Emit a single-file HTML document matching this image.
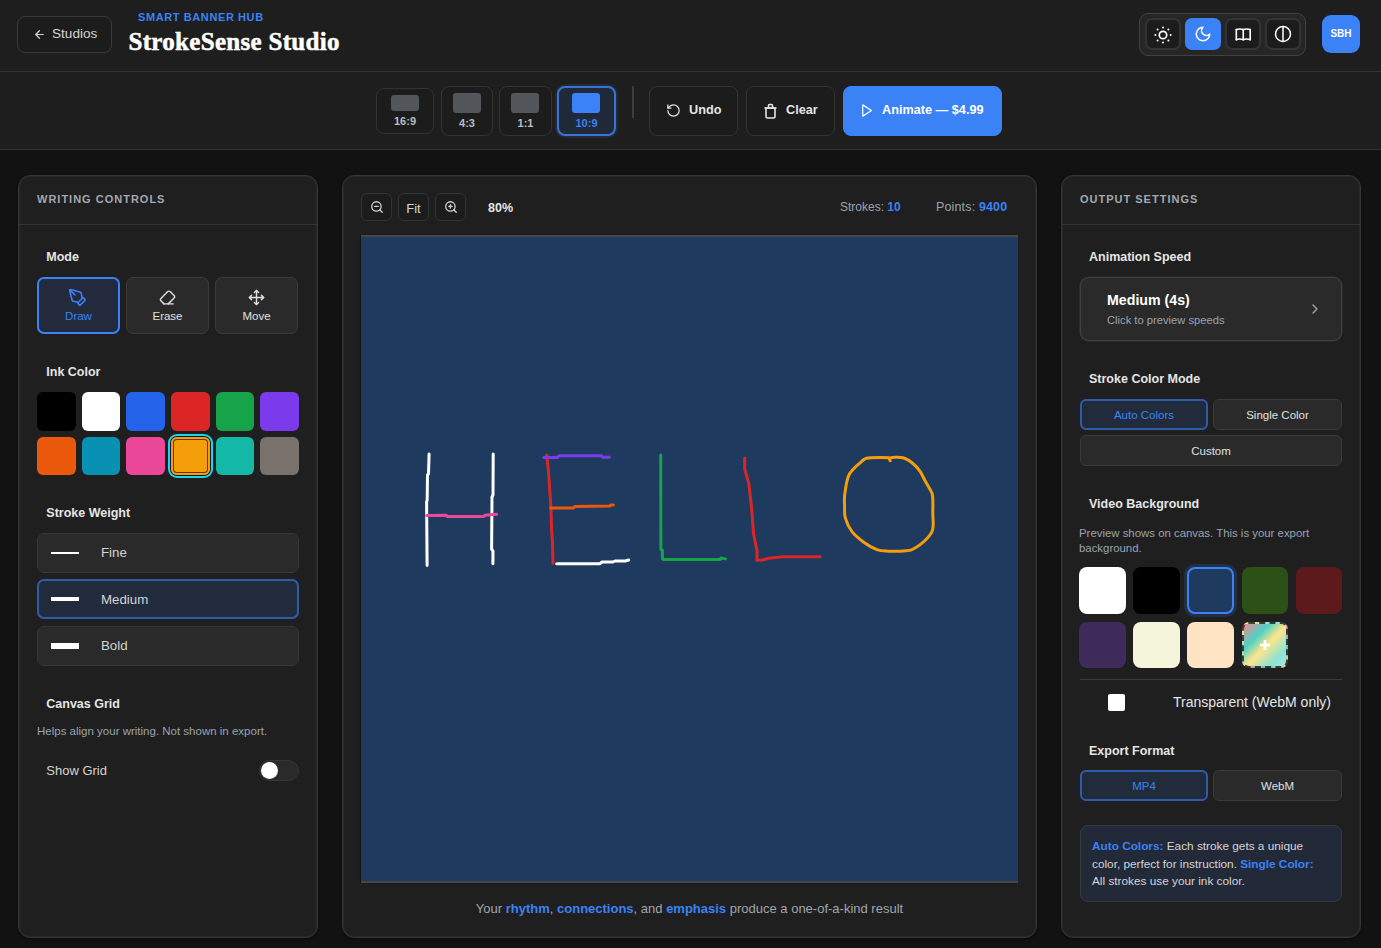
<!DOCTYPE html>
<html><head><meta charset="utf-8">
<style>
*{box-sizing:border-box;margin:0;padding:0}
html,body{width:1381px;height:948px;overflow:hidden;background:#121212;font-family:"Liberation Sans",sans-serif;color:#e5e5e5}
.abs{position:absolute}
svg{display:block;position:absolute}
.t{position:absolute;line-height:1;white-space:nowrap}
/* header */
#hdr{position:absolute;left:0;top:0;width:1381px;height:72px;background:#1e1e1e;border-bottom:1px solid #333}
#back{position:absolute;left:17px;top:16px;width:95px;height:37px;border:1px solid #3a3a3a;border-radius:8px;background:#1c1c1c}
#brand{left:138px;top:12px;font-size:11px;font-weight:bold;letter-spacing:0.6px;color:#3b82f6}
#title{left:128.5px;top:29px;font-family:"Liberation Serif",serif;font-weight:bold;font-size:25px;color:#fff;letter-spacing:0.3px;-webkit-text-stroke:0.5px #fff}
#themes{position:absolute;left:1139px;top:13px;width:167px;height:43px;border:1px solid #414141;border-radius:9px;background:#262626}
.tbtn{position:absolute;top:4px;width:36px;height:32px;border-radius:7px;border:2px solid #333;background:#1c1c1c}
.tbtn.on{background:#3b82f6;border-color:#3b82f6}
#avatar{position:absolute;left:1322px;top:15px;width:38px;height:38px;border-radius:9px;background:#3b82f6;color:#fff;font-weight:bold;font-size:10px;text-align:center;line-height:38px}
/* toolbar */
#tb{position:absolute;left:0;top:72px;width:1381px;height:78px;background:#1e1e1e;border-bottom:1px solid #333}
.ar{position:absolute;border:1px solid #333;border-radius:8px;background:#1c1c1c}
.ar .pv{position:absolute;background:#52555a;border-radius:3px}
.ar .lb{position:absolute;left:0;right:0;text-align:center;font-size:11px;line-height:1;font-weight:bold;color:#b8bcc4}
.ar.on{border:2px solid #3a72d6;background:#1f2937;box-shadow:0 0 0 2px rgba(59,130,246,.12)}
.ar.on .pv{background:#3b82f6}
.ar.on .lb{color:#3b82f6}
.abtn{position:absolute;top:14px;height:50px;border:1px solid #333;border-radius:8px;background:#1c1c1c}
.abtn .t{font-size:12.7px;font-weight:bold;color:#e5e5e5}
/* panels */
.panel{position:absolute;top:175px;height:763px;background:#1f1f1f;border:1px solid #353535;border-radius:12px;box-shadow:0 1px 3px rgba(0,0,0,.4),inset 0 0 0 1px #282828}
.ph{position:absolute;left:0;top:0;right:0;height:49px;border-bottom:1px solid #333}
.ph .t{left:18px;top:18px;font-size:11px;font-weight:bold;letter-spacing:1.0px;color:#a3a8b0}
.lbl{font-size:12.5px;font-weight:bold;color:#e5e5e5}
.mode{position:absolute;top:101px;width:83px;height:57px;border:1px solid #3a3a3a;border-radius:7px;background:#2a2a2a}
.mode.on{border:2px solid #3b82f6;background:#222a3c}
.mode .t{left:0;right:0;text-align:center;top:33px;font-size:11.5px;color:#e0e0e0}
.mode.on .t{color:#3b82f6;top:32px}
.sw{position:absolute;width:38.67px;height:38.67px;border-radius:6px}
.wt{position:absolute;left:18px;width:262px;height:40px;border:1px solid #363636;border-radius:7px;background:#2a2a2a}
.wt.on{border:2px solid #2f5ca8;background:#222b3c}
.wt .ln{position:absolute;left:13px;width:28px;background:#fff;top:50%}
.wt .t{left:63px;top:12px;font-size:13.3px;color:#d4d4d4}
.gray{color:#9ca3af}
.btn2{position:absolute;height:31px;border:1px solid #3a3a3a;border-radius:6px;background:#2a2a2a}
.btn2 .t{left:0;right:0;text-align:center;top:9.5px;font-size:11.5px;color:#e0e0e0}
.btn2.on{border:2px solid #2f5ca8;background:#222b3c}
.btn2.on .t{color:#3b82f6;top:8.5px}
.bg{position:absolute;width:46.4px;height:46.3px;border-radius:8px}
.zb{position:absolute;top:17px;width:31px;height:28px;border:1px solid #333;border-radius:6px;background:#1c1c1c}
</style></head><body>
<div id="hdr">
  <div id="back"><svg style="left:15px;top:11px" width="13" height="13" viewBox="0 0 24 24" fill="none" stroke="#d4d4d4" stroke-width="2.2" stroke-linecap="round" stroke-linejoin="round"><path d="m12 19-7-7 7-7"/><path d="M19 12H5"/></svg><div class="t" style="left:34px;top:9.5px;font-size:13.6px;color:#d4d4d4">Studios</div></div>
  <div id="brand" class="t">SMART BANNER HUB</div>
  <div id="title" class="t">StrokeSense Studio</div>
  <div id="themes">
    <div class="tbtn" style="left:5px"><svg style="left:7px;top:5.6px" width="18" height="18" viewBox="0 0 18 18" fill="none" stroke="#fff" stroke-width="1.7"><circle cx="9" cy="9" r="3.7"/><g fill="#fff" stroke="none"><circle cx="9" cy="1.4" r="1"/><circle cx="9" cy="16.6" r="1"/><circle cx="1.4" cy="9" r="1"/><circle cx="16.6" cy="9" r="1"/><circle cx="3.6" cy="3.6" r="1"/><circle cx="14.4" cy="3.6" r="1"/><circle cx="3.6" cy="14.4" r="1"/><circle cx="14.4" cy="14.4" r="1"/></g></svg></div>
    <div class="tbtn on" style="left:45px"><svg style="left:7px;top:5px" width="18" height="18" viewBox="0 0 24 24" fill="none" stroke="#fff" stroke-width="2" stroke-linecap="round" stroke-linejoin="round"><path d="M12 3a6 6 0 0 0 9 9 9 9 0 1 1-9-9Z"/></svg></div>
    <div class="tbtn" style="left:85px"><svg style="left:6.5px;top:5.2px" width="18.5" height="18.5" viewBox="0 0 24 24" fill="none" stroke="#fff" stroke-width="2.1" stroke-linecap="round" stroke-linejoin="round"><path d="M3 19a13 13 0 0 1 9 0a13 13 0 0 1 9 0"/><path d="M3 6a13 13 0 0 1 9 0a13 13 0 0 1 9 0"/><path d="M3 6v13"/><path d="M12 6v13"/><path d="M21 6v13"/></svg></div>
    <div class="tbtn" style="left:125px"><svg style="left:7px;top:5px" width="18" height="18" viewBox="0 0 24 24" fill="none" stroke="#fff" stroke-width="2" stroke-linecap="round" stroke-linejoin="round"><circle cx="12" cy="12" r="10"/><path d="M12 2v20"/></svg></div>
  </div>
  <div id="avatar">SBH</div>
</div>

<div id="tb">
  <div class="ar" style="left:376px;top:16px;width:58px;height:46px"><div class="pv" style="left:14px;top:6px;width:28px;height:16px"></div><div class="lb" style="top:27px">16:9</div></div>
  <div class="ar" style="left:441px;top:14px;width:52px;height:50px"><div class="pv" style="left:11px;top:6px;width:28px;height:20px"></div><div class="lb" style="top:31px">4:3</div></div>
  <div class="ar" style="left:499px;top:14px;width:53px;height:50px"><div class="pv" style="left:11px;top:6px;width:28px;height:20px"></div><div class="lb" style="top:31px">1:1</div></div>
  <div class="ar on" style="left:557px;top:14px;width:59px;height:50px"><div class="pv" style="left:13px;top:5px;width:28px;height:20px"></div><div class="lb" style="top:30px">10:9</div></div>
  <div class="abs" style="left:631.5px;top:14px;width:2px;height:32px;background:#3d3d3d"></div>
  <div class="abtn" style="left:649px;width:89px"><svg style="left:16px;top:16px" width="15" height="15" viewBox="0 0 24 24" fill="none" stroke="#e5e5e5" stroke-width="2" stroke-linecap="round" stroke-linejoin="round"><path d="M3 12a9 9 0 1 0 9-9 9.75 9.75 0 0 0-6.74 2.74L3 8"/><path d="M3 3v5h5"/></svg><div class="t" style="left:39px;top:17px">Undo</div></div>
  <div class="abtn" style="left:746px;width:89px"><svg style="left:17px;top:16px" width="13" height="16" viewBox="0 0 13 16" fill="none" stroke="#e5e5e5" stroke-width="1.6" stroke-linecap="round" stroke-linejoin="round"><path d="M2 5h9v8.5a1.5 1.5 0 0 1-1.5 1.5h-6A1.5 1.5 0 0 1 2 13.5z"/><path d="M1 5h11"/><path d="M4.5 5V2.5a1 1 0 0 1 1-1h2a1 1 0 0 1 1 1V5"/></svg><div class="t" style="left:39px;top:17px">Clear</div></div>
  <div class="abtn" style="left:843px;width:159px;background:#3b82f6;border-color:#3b82f6"><svg style="left:15px;top:16px" width="15" height="15" viewBox="0 0 24 24" fill="none" stroke="#fff" stroke-width="2" stroke-linecap="round" stroke-linejoin="round"><polygon points="6 3 20 12 6 21 6 3"/></svg><div class="t" style="left:38px;top:17px;color:#fff">Animate — $4.99</div></div>
</div>

<!-- LEFT PANEL -->
<div class="panel" style="left:18px;width:300px">
  <div class="ph"><div class="t">WRITING CONTROLS</div></div>
  <div class="t lbl" style="left:27.3px;top:75px">Mode</div>
  <div class="mode on" style="left:18px">
    <svg style="left:28.5px;top:9px" width="19" height="19" viewBox="0 0 24 24" fill="none" stroke="#3b82f6" stroke-width="2" stroke-linecap="round" stroke-linejoin="round"><path d="M15.707 21.293a1 1 0 0 1-1.414 0l-1.586-1.586a1 1 0 0 1 0-1.414l5.586-5.586a1 1 0 0 1 1.414 0l1.586 1.586a1 1 0 0 1 0 1.414z"/><path d="m18 13-1.375-6.874a1 1 0 0 0-.746-.776L3.235 2.028a1 1 0 0 0-1.207 1.207L5.35 15.879a1 1 0 0 0 .776.746L13 18"/><path d="m2.3 2.3 6.5 6.5"/></svg>
    <div class="t">Draw</div></div>
  <div class="mode" style="left:107px">
    <svg style="left:32px;top:11px" width="17" height="17" viewBox="0 0 24 24" fill="none" stroke="#e0e0e0" stroke-width="2" stroke-linecap="round" stroke-linejoin="round"><path d="m7 21-4.3-4.3c-1-1-1-2.5 0-3.4l9.6-9.6c1-1 2.5-1 3.4 0l5.6 5.6c1 1 1 2.5 0 3.4L13 21"/><path d="M20 21H7"/></svg>
    <div class="t">Erase</div></div>
  <div class="mode" style="left:196px">
    <svg style="left:32px;top:11px" width="17" height="17" viewBox="0 0 24 24" fill="none" stroke="#e0e0e0" stroke-width="2" stroke-linecap="round" stroke-linejoin="round"><path d="M12 2v20"/><path d="m15 19-3 3-3-3"/><path d="m19 9 3 3-3 3"/><path d="M2 12h20"/><path d="m5 9-3 3 3 3"/><path d="m9 5 3-3 3 3"/></svg>
    <div class="t">Move</div></div>

  <div class="t lbl" style="left:27.3px;top:190px">Ink Color</div>
  <div class="sw" style="left:18px;top:216px;background:#000"></div>
  <div class="sw" style="left:62.67px;top:216px;background:#fff"></div>
  <div class="sw" style="left:107.33px;top:216px;background:#2563eb"></div>
  <div class="sw" style="left:152px;top:216px;background:#dc2626"></div>
  <div class="sw" style="left:196.67px;top:216px;background:#16a34a"></div>
  <div class="sw" style="left:241.33px;top:216px;background:#7c3aed"></div>
  <div class="sw" style="left:18px;top:260.67px;background:#ea580c"></div>
  <div class="sw" style="left:62.67px;top:260.67px;background:#0891b2"></div>
  <div class="sw" style="left:107.33px;top:260.67px;background:#ec4899"></div>
  <div class="sw" style="left:152px;top:260.67px;background:#f59e0b;box-shadow:0 0 0 1px #0f172a,0 0 0 3px #22d3ee,inset 0 0 0 2px #f59e0b,inset 0 0 0 3px rgba(40,25,0,.75)"></div>
  <div class="sw" style="left:196.67px;top:260.67px;background:#14b8a6"></div>
  <div class="sw" style="left:241.33px;top:260.67px;background:#78716c"></div>

  <div class="t lbl" style="left:27.3px;top:331px">Stroke Weight</div>
  <div class="wt" style="top:357px"><div class="ln" style="height:2px;margin-top:-1px"></div><div class="t">Fine</div></div>
  <div class="wt on" style="top:403px"><div class="ln" style="height:4px;margin-top:-2px;left:12px"></div><div class="t" style="left:62px;top:11.5px">Medium</div></div>
  <div class="wt" style="top:450px"><div class="ln" style="height:6px;margin-top:-3px"></div><div class="t">Bold</div></div>

  <div class="t lbl" style="left:27.3px;top:522px">Canvas Grid</div>
  <div class="t gray" style="left:18px;top:550px;font-size:11.5px">Helps align your writing. Not shown in export.</div>
  <div class="t" style="left:27.3px;top:588px;font-size:13px;color:#d4d4d4">Show Grid</div>
  <div class="abs" style="left:240px;top:583.5px;width:40px;height:21px;border-radius:11px;background:#2a2a2a;border:1px solid #363636"><div class="abs" style="left:1px;top:1px;width:17px;height:17px;border-radius:50%;background:#fff"></div></div>
</div>

<!-- CENTER PANEL -->
<div class="panel" style="left:342px;width:695px">
  <div class="zb" style="left:18px"><svg style="left:7.5px;top:5.5px" width="14" height="14" viewBox="0 0 24 24" fill="none" stroke="#d4d4d4" stroke-width="2.2" stroke-linecap="round" stroke-linejoin="round"><circle cx="11" cy="11" r="8"/><path d="m21 21-4.3-4.3"/><path d="M8 11h6"/></svg></div>
  <div class="zb" style="left:55px"><div class="t" style="left:0;right:0;text-align:center;top:8px;font-size:13px;color:#d4d4d4">Fit</div></div>
  <div class="zb" style="left:92px"><svg style="left:7.5px;top:5.5px" width="14" height="14" viewBox="0 0 24 24" fill="none" stroke="#d4d4d4" stroke-width="2.2" stroke-linecap="round" stroke-linejoin="round"><circle cx="11" cy="11" r="8"/><path d="m21 21-4.3-4.3"/><path d="M11 8v6"/><path d="M8 11h6"/></svg></div>
  <div class="t" style="left:145px;top:26px;font-size:12.5px;font-weight:bold;color:#e5e5e5">80%</div>
  <div class="t gray" style="left:497px;top:25px;font-size:12px">Strokes: <b style="color:#3b82f6">10</b></div>
  <div class="t gray" style="left:593px;top:25px;font-size:12.5px;letter-spacing:0.15px">Points: <b style="color:#3b82f6">9400</b></div>
  <div class="abs" style="left:18px;top:59px;width:657px;height:648px;background:#1e3a5f;border-top:2px solid #474747;border-bottom:2px solid #474747;box-shadow:-1px 0 1px rgba(0,0,0,.35)"></div>
  <svg style="left:18px;top:59px" width="657" height="648" viewBox="361 235 657 648" fill="none" stroke-width="3" stroke-linecap="round" stroke-linejoin="round">
    <polyline stroke="#ffffff" points="429.1,454 428.5,473.8 427.5,475 427.2,499.9 426.6,502 427.1,565.4"/>
    <polyline stroke="#ffffff" points="493.2,454 493,495 492,497 491.6,549.3 493,551 492.9,563.7"/>
    <polyline stroke="#ec4899" points="426.7,515.4 445.9,515.2 447.5,516.6 483.6,516.6 485,515.2 496.6,514.3"/>
    <polyline stroke="#dc2626" points="546.7,454.9 548.5,472.4 549.5,486 550.8,505.4 551.5,527.3 552.5,543.8 553,563.2"/>
    <polyline stroke="#7c3aed" points="543.7,457.6 557.4,457.6 559,455.7 601.3,455.7 603,457.3 609.3,457.3"/>
    <polyline stroke="#ea580c" points="550.6,508.1 573.2,508 575,506.5 609.6,506 611,505 613.4,505.1"/>
    <polyline stroke="#ffffff" points="556.7,563.7 600,563.7 602,562 613,562 615,561 625.3,561 628.8,560"/>
    <polyline stroke="#16a34a" points="660.7,454.9 660.9,549.3 662.4,550.5 662.4,558.9 663.5,559.6 720,559.6 721,558 725.4,558.9"/>
    <polyline stroke="#dc2626" points="744.7,458 744.7,469 748.8,483.4 751.5,506.7 753.6,534.2 757,550.6 757,560.2 762.5,560 768.7,558.2 783,556.8 820.1,556.8"/>
    <path stroke="#f59e0b" d="M890.2,460.8 C890.2,460.3 888.1,458.4 890.2,457.9 C892.3,457.4 899.2,456.9 902.9,457.8 C906.6,458.7 909.8,461.0 912.6,463.2 C915.4,465.4 917.9,468.3 919.9,471.1 C921.9,473.9 923.2,477.3 924.8,480.2 C926.4,483.1 928.3,486.1 929.6,488.7 C930.9,491.3 932.1,491.9 932.6,496 C933.1,500.1 932.8,507.4 932.8,513 C932.8,518.6 933.9,525.3 932.6,529.9 C931.3,534.5 927.9,537.7 924.8,540.8 C921.7,543.9 916.8,547.1 913.8,548.7 C910.8,550.4 910.8,550.3 906.6,550.7 C902.4,551.1 893.4,551.4 888.4,551.2 C883.4,551.0 880.8,551.2 876.8,549.7 C872.8,548.2 868.2,545.5 864.1,542.5 C860.0,539.5 855.1,535.8 852,531.7 C848.9,527.6 846.5,522.1 845.3,517.8 C844.1,513.5 844.7,509.9 844.6,506 C844.5,502.1 844.1,499.6 844.7,494.7 C845.3,489.8 846.9,480.7 848.3,476.5 C849.7,472.3 851.2,471.6 853.2,469.3 C855.2,467.1 857.8,464.9 860,463 C862.2,461.1 863.1,459.1 866.5,458.2 C869.9,457.3 876.5,457.4 880.5,457.4 C884.5,457.3 888.6,457.8 890.2,457.9"/>
  </svg>
  <div class="t gray" style="left:0;right:0;text-align:center;top:726px;font-size:13px;color:#a0a6ae">Your <b style="color:#3b82f6">rhythm</b>, <b style="color:#3b82f6">connections</b>, and <b style="color:#3b82f6">emphasis</b> produce a one-of-a-kind result</div>
</div>

<!-- RIGHT PANEL -->
<div class="panel" style="left:1061px;width:300px">
  <div class="ph"><div class="t">OUTPUT SETTINGS</div></div>
  <div class="t lbl" style="left:27px;top:75px">Animation Speed</div>
  <div class="abs" style="left:18px;top:101px;width:262px;height:64px;border:1px solid #404040;border-radius:9px;background:#2a2a2a;box-shadow:0 0 0 0.6px #353535">
    <div class="t" style="left:26px;top:15px;font-size:14.2px;font-weight:bold;color:#fff">Medium (4s)</div>
    <div class="t gray" style="left:26px;top:37px;font-size:11.2px">Click to preview speeds</div>
    <svg style="left:226px;top:23px" width="16" height="16" viewBox="0 0 24 24" fill="none" stroke="#a0a6ae" stroke-width="2" stroke-linecap="round" stroke-linejoin="round"><path d="m9 18 6-6-6-6"/></svg>
  </div>
  <div class="t lbl" style="left:27px;top:197px">Stroke Color Mode</div>
  <div class="btn2 on" style="left:18px;top:223px;width:128px"><div class="t">Auto Colors</div></div>
  <div class="btn2" style="left:151px;top:223px;width:129px"><div class="t">Single Color</div></div>
  <div class="btn2" style="left:18px;top:259px;width:262px"><div class="t">Custom</div></div>

  <div class="t lbl" style="left:27px;top:322px">Video Background</div>
  <div class="t gray" style="left:17px;top:350px;font-size:11.4px;line-height:15.2px;white-space:normal;width:250px">Preview shows on canvas. This is your export background.</div>
  <div class="bg" style="left:17.2px;top:391.4px;background:#fff"></div>
  <div class="bg" style="left:71.3px;top:391.4px;background:#000"></div>
  <div class="bg" style="left:125.4px;top:391.4px;background:#1e3a5f;border:2px solid #3b82f6;box-shadow:0 0 0 3px rgba(59,130,246,.16)"></div>
  <div class="bg" style="left:179.5px;top:391.4px;background:#2d5016"></div>
  <div class="bg" style="left:233.6px;top:391.4px;background:#5c1a1a"></div>
  <div class="bg" style="left:17.2px;top:445.8px;background:#3f2a5c"></div>
  <div class="bg" style="left:71.3px;top:445.8px;background:#f5f5dc"></div>
  <div class="bg" style="left:125.4px;top:445.8px;background:#ffe4c4"></div>
  <div class="bg" style="left:179.5px;top:445.8px;border-radius:7px;background:linear-gradient(135deg,#f08c8c 0%,#4fd1c5 30%,#fde68a 52%,#8ee3d5 80%,#a7e8de 100%);border:2px dashed rgba(24,24,24,.8)"><svg style="left:16.5px;top:16.5px" width="10" height="10" viewBox="0 0 10 10"><rect x="3.7" y="0" width="2.6" height="10" fill="#fff"/><rect x="0" y="3.7" width="10" height="2.6" fill="#fff"/></svg></div>
  <div class="abs" style="left:18px;top:503px;width:262px;height:1px;background:#3a3a3a"></div>
  <div class="abs" style="left:46px;top:518px;width:17px;height:17px;background:#fff;border-radius:2px"></div>
  <div class="t" style="left:111px;top:519px;font-size:14px;color:#e5e5e5">Transparent (WebM only)</div>

  <div class="t lbl" style="left:27px;top:569px">Export Format</div>
  <div class="btn2 on" style="left:18px;top:594px;width:128px;height:31px"><div class="t">MP4</div></div>
  <div class="btn2" style="left:151px;top:594px;width:129px;height:31px"><div class="t">WebM</div></div>
  <div class="abs" style="left:17.5px;top:649px;width:262.5px;height:77px;border:1px solid #363a40;border-radius:8px;background:#222a3a">
    <div class="t" style="left:11.5px;top:12px;font-size:11.8px;line-height:17.6px;white-space:normal;width:232px;color:#d4d4d4"><b style="color:#3b82f6">Auto Colors:</b> Each stroke gets a unique color, perfect for instruction. <b style="color:#3b82f6">Single Color:</b> All strokes use your ink color.</div>
  </div>
</div>
</body></html>
